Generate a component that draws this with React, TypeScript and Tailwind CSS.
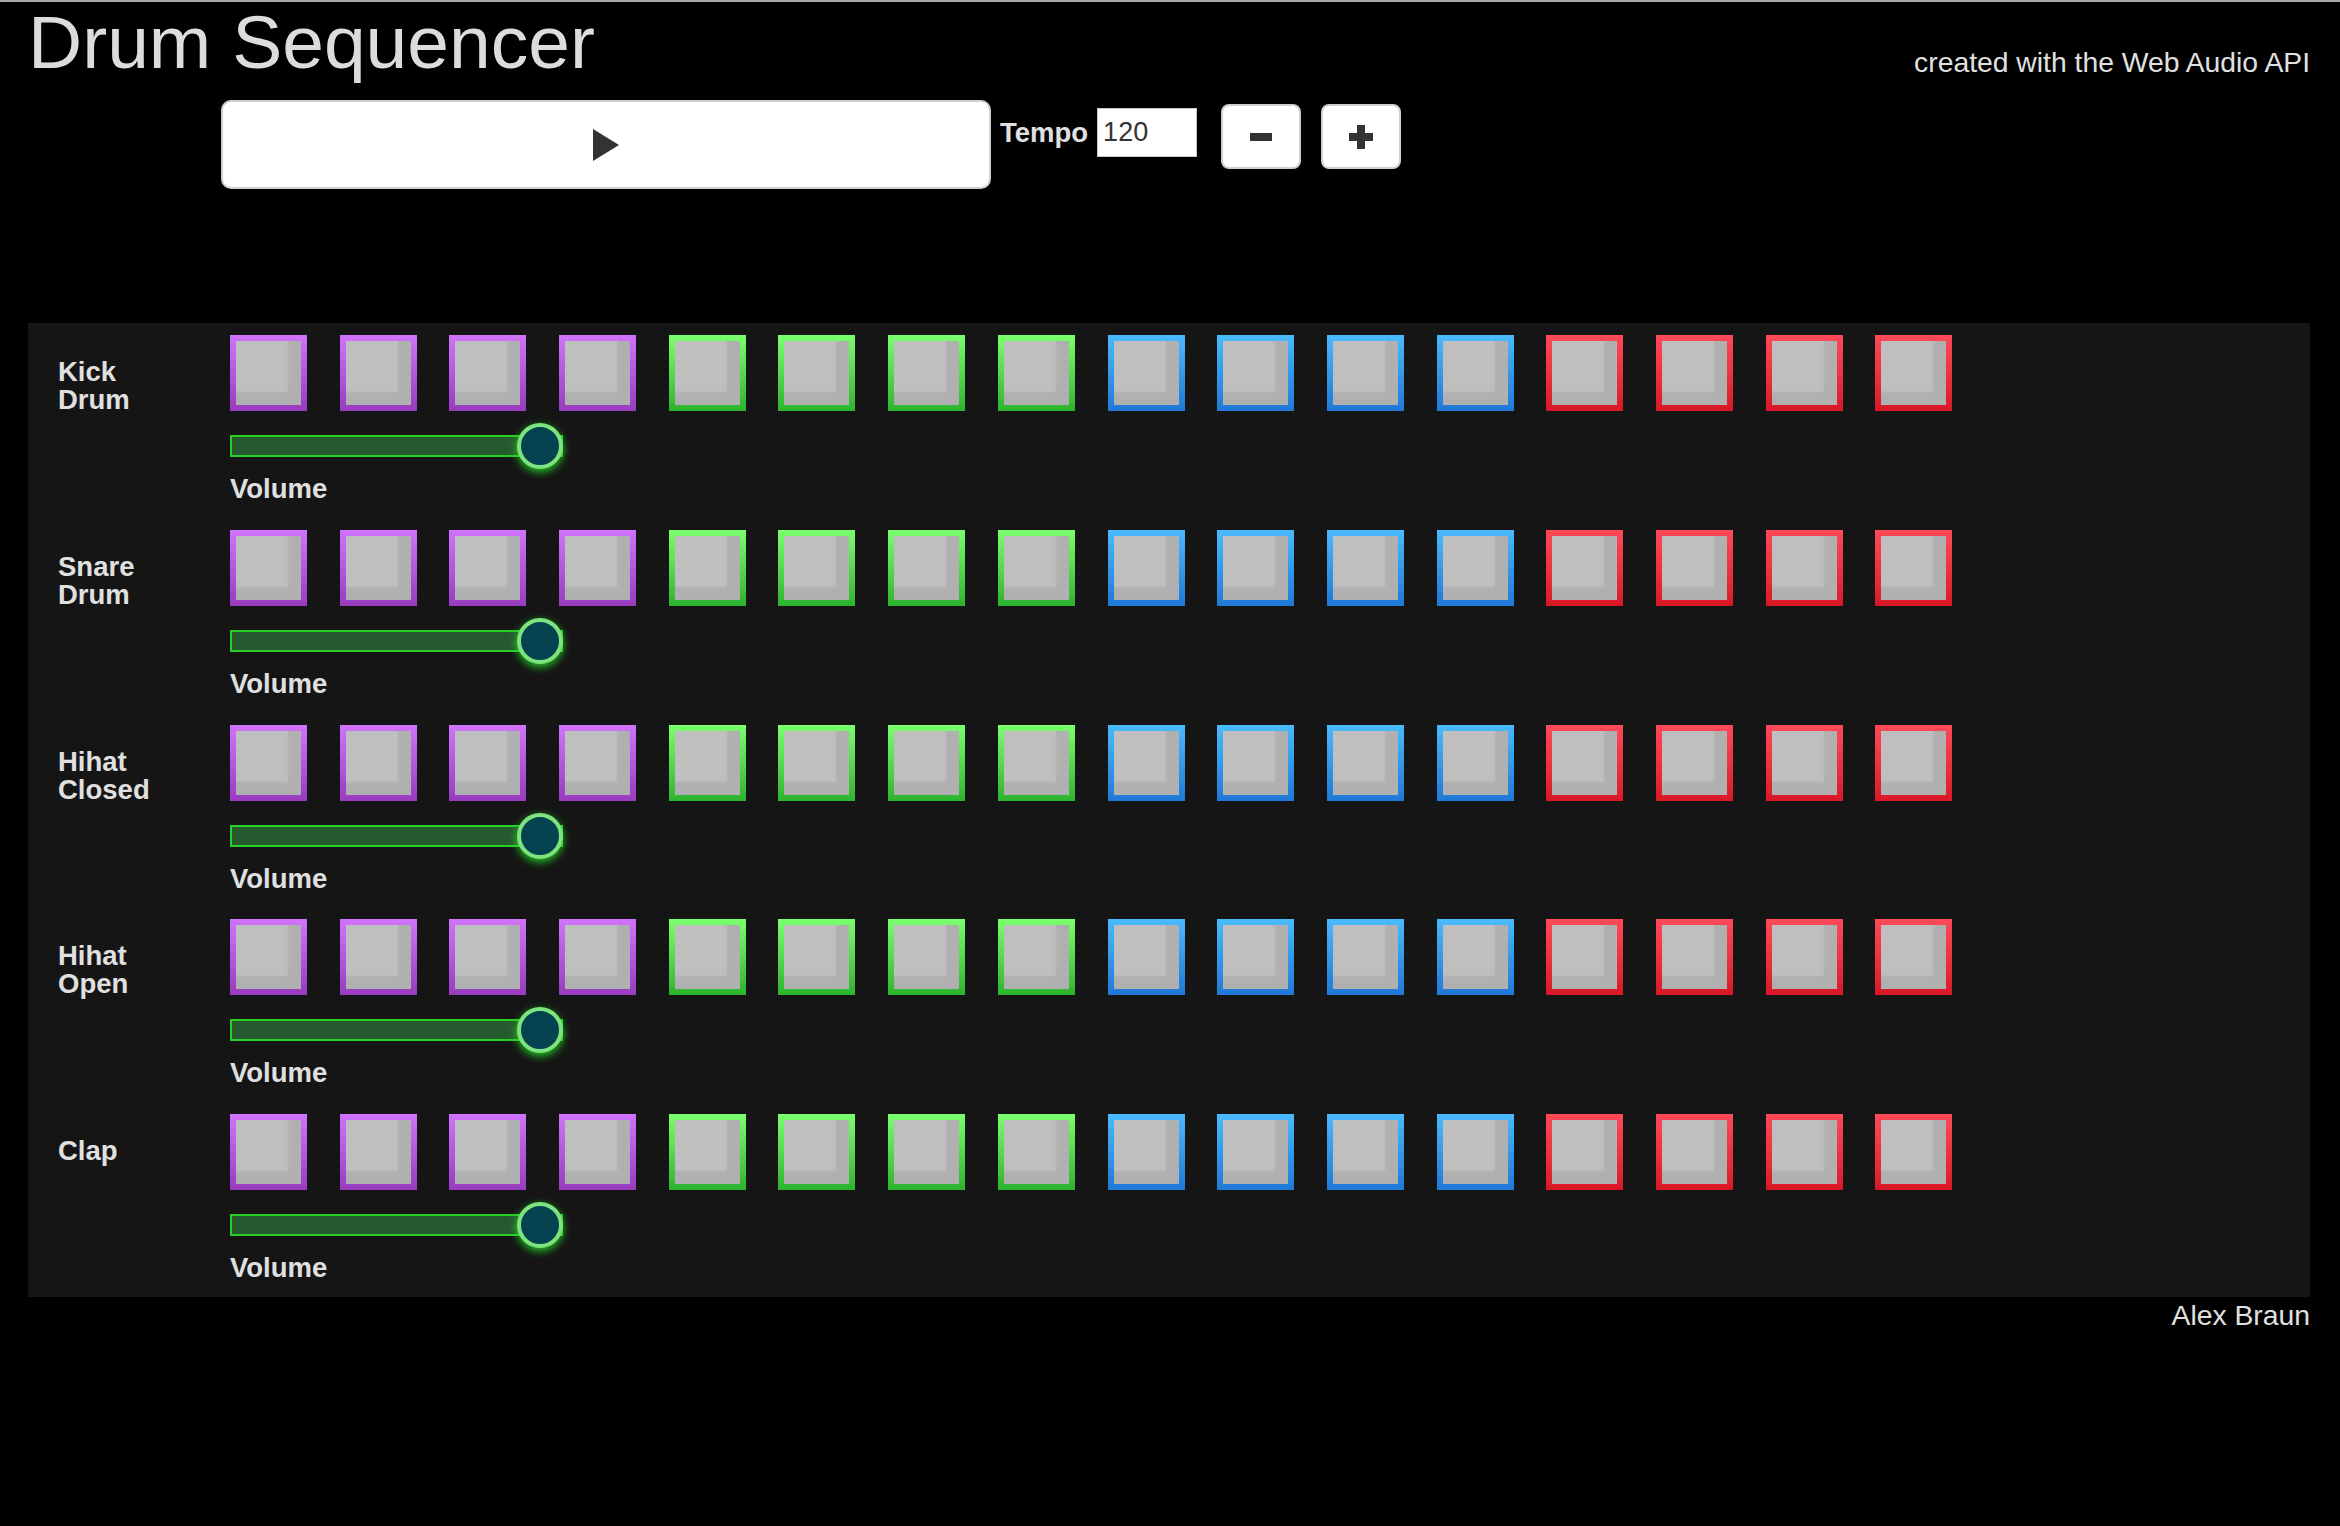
const colors = [
  'from-[#d074fb] to-[#983bbe]',
  'from-[#d074fb] to-[#983bbe]',
  'from-[#d074fb] to-[#983bbe]',
  'from-[#d074fb] to-[#983bbe]',
  'from-[#7aff6e] to-[#2bb42e]',
  'from-[#7aff6e] to-[#2bb42e]',
  'from-[#7aff6e] to-[#2bb42e]',
  'from-[#7aff6e] to-[#2bb42e]',
  'from-[#4bbafd] to-[#1f79d7]',
  'from-[#4bbafd] to-[#1f79d7]',
  'from-[#4bbafd] to-[#1f79d7]',
  'from-[#4bbafd] to-[#1f79d7]',
  'from-[#fe4959] to-[#d91626]',
  'from-[#fe4959] to-[#d91626]',
  'from-[#fe4959] to-[#d91626]',
  'from-[#fe4959] to-[#d91626]',
];

const tracks = ['Kick Drum', 'Snare Drum', 'Hihat Closed', 'Hihat Open', 'Clap'];

function Pad({ color }: { color: string }) {
  return (
    <div className={`w-[77px] h-[76px] p-[6px] bg-gradient-to-b ${color}`}>
      <div className="w-full h-full bg-[#bfbfbf] shadow-[inset_-13px_-13px_2px_rgba(0,0,0,0.08)]" />
    </div>
  );
}

function VolumeSlider() {
  return (
    <div className="relative w-[333px] h-[22px] mt-[24px]">
      <div className="w-full h-full bg-[#265a2e] border-2 border-[#26cf26]" />
      <div className="absolute right-0 top-[-12px] w-[46px] h-[46px] rounded-full bg-[#064351] border-[4px] border-[#7de37d] shadow-[0_3px_9px_rgba(40,230,40,0.85)]" />
    </div>
  );
}

function TrackRow({ name }: { name: string }) {
  return (
    <div className="flex h-[194.8px] pt-[12px]">
      <div className="w-[202px] pl-[30px] pt-[23px]">
        <div className="w-[120px] text-[27.5px] leading-[28px] font-bold text-[#e0e0e0]">{name}</div>
      </div>
      <div className="flex flex-col">
        <div className="flex gap-[32.7px]">
          {colors.map((c, i) => (
            <Pad key={i} color={c} />
          ))}
        </div>
        <VolumeSlider />
        <div className="mt-[18px] text-[27.5px] leading-[28px] font-bold text-[#e0e0e0]">Volume</div>
      </div>
    </div>
  );
}

export default function App() {
  return (
    <div className="min-h-[1526px] bg-black border-t-2 border-[#a8a8a8] pl-[28px] pr-[30px] font-['Liberation_Sans',Arial,sans-serif]">
      <div className="flex justify-between items-start h-[73px]">
        <h1 className="mt-[3px] text-[75px] leading-[75px] font-normal text-[#dcdcdc]">Drum Sequencer</h1>
        <div className="mt-[46px] text-[28.3px] leading-[28px] text-[#e0e0e0]">created with the Web Audio API</div>
      </div>

      <div className="flex items-start mt-[25px] pl-[193px]">
        <button className="w-[770px] h-[89px] bg-white border-2 border-[#cfcfcf] rounded-[10px] flex items-center justify-center">
          <svg width="26" height="32" viewBox="0 0 26 32">
            <polygon points="0,0 26,16 0,32" fill="#333" />
          </svg>
        </button>
        <span className="ml-[9px] mt-[19px] text-[27.5px] leading-[28px] font-bold text-[#e0e0e0]">Tempo</span>
        <input
          defaultValue="120"
          className="ml-[9px] mt-[8px] w-[100px] h-[49px] bg-white border border-[#c8c8c8] pl-[5px] text-[27px] text-[#333] outline-none"
        />
        <button className="ml-[24px] mt-[4px] w-[80px] h-[65px] bg-white border-2 border-[#cfcfcf] rounded-[8px] flex items-center justify-center">
          <svg width="22" height="8" viewBox="0 0 22 8">
            <rect x="0" y="0" width="22" height="8" fill="#333" />
          </svg>
        </button>
        <button className="ml-[20px] mt-[4px] w-[80px] h-[65px] bg-white border-2 border-[#cfcfcf] rounded-[8px] flex items-center justify-center">
          <svg width="24" height="24" viewBox="0 0 24 24">
            <rect x="0" y="8" width="24" height="8" fill="#333" />
            <rect x="8" y="0" width="8" height="24" fill="#333" />
          </svg>
        </button>
      </div>

      <div className="mt-[134px] bg-[#151515] flex flex-col">
        {tracks.map((t) => (
          <TrackRow key={t} name={t} />
        ))}
      </div>

      <div className="mt-[4px] text-right text-[28.3px] leading-[28px] text-[#e0e0e0]">Alex Braun</div>
    </div>
  );
}
